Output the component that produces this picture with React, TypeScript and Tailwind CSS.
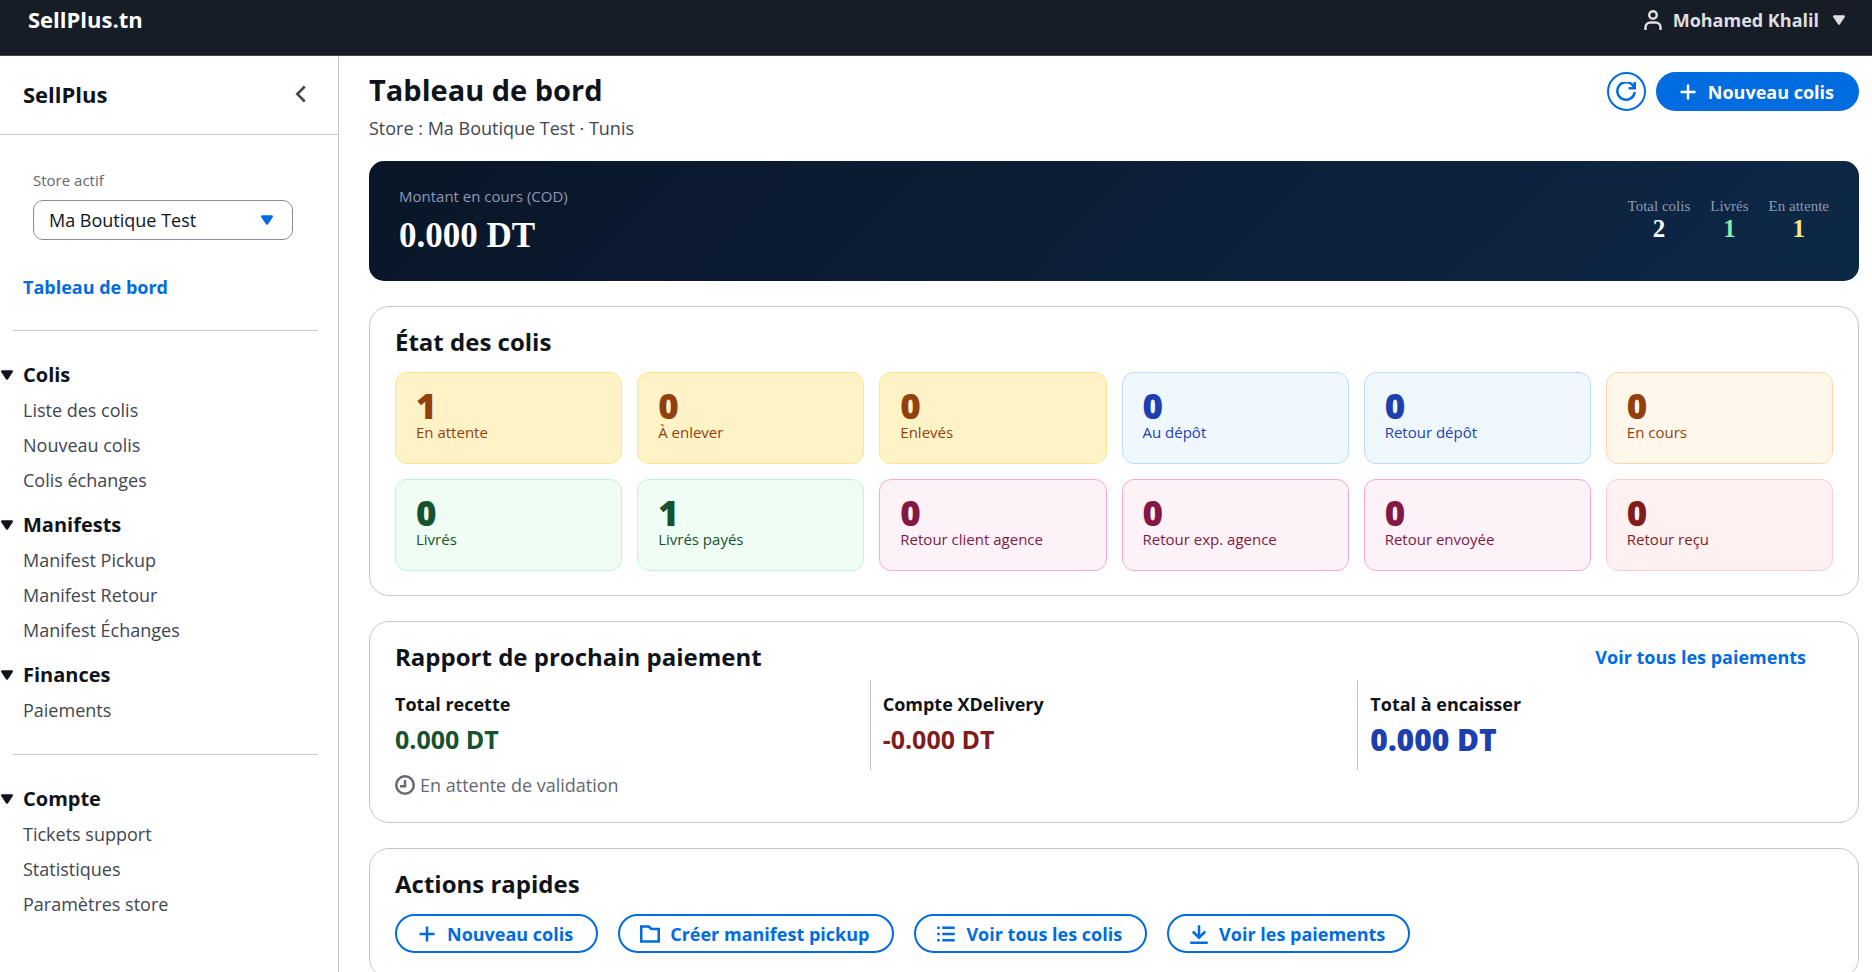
import type { ReactNode } from "react";
import clsx from "clsx";

const iconPaths = {
  user: "M2 16v-2a4 4 0 0 1 4-4h4a4 4 0 0 1 4 4v2M11 4a3 3 0 1 1-6 0 3 3 0 0 1 6 0z",
  refresh: "M10 5h5V0M15 8a7 7 0 1 1-.7-4",
  plus: "M8 2v12M14 8H2",
  left: "m11 2-6 6 6 6",
  folder: "M15 14H1V2h6l2 2h6z",
  list: "M5 3h10M5 8h10M5 13h10M1 3h2M1 8h2M1 13h2",
  download: "M1 15h14M8 1v10M3 6l5 5 5-5",
  clock: "M15 8A7 7 0 1 1 1 8a7 7 0 0 1 14 0zM8 4v5H4",
};

type IconName = keyof typeof iconPaths;

const Icon = ({ name, className }: { name: IconName; className?: string }) => (
  <svg viewBox="0 0 16 16" className={clsx("h-5 w-5 shrink-0", className)} fill="none" stroke="currentColor" strokeWidth="2" aria-hidden="true">
    <path d={iconPaths[name]} />
  </svg>
);

const Caret = ({ className }: { className?: string }) => (
  <svg viewBox="3 4 10 8" className={clsx("h-2.5 w-3 shrink-0", className)} fill="currentColor" stroke="currentColor" strokeWidth="2" strokeLinejoin="round" aria-hidden="true">
    <path d="M4 5h8l-4 6z" />
  </svg>
);

const mainSections = [
  { title: "Colis", links: ["Liste des colis", "Nouveau colis", "Colis échanges"] },
  { title: "Manifests", links: ["Manifest Pickup", "Manifest Retour", "Manifest Échanges"] },
  { title: "Finances", links: ["Paiements"] },
];

const accountSections = [
  { title: "Compte", links: ["Tickets support", "Statistiques", "Paramètres store"] },
];

const tones = {
  amber: "bg-[#fef3c7] border-[#fde68a] text-[#92400e]",
  blue: "bg-[#eff7ff] border-[#bfdbfe] text-[#1e40af]",
  orange: "bg-[#fff7ec] border-[#fed7aa] text-[#92400e]",
  green: "bg-[#f0fdf4] border-[#bbf7d0] text-[#14532d]",
  pink: "bg-[#fdf2f8] border-[#f9a8d4] text-[#831843]",
  red: "bg-[#fff1f2] border-[#fecdd3] text-[#7f1d1d]",
};

const statuses: { label: string; value: number; tone: keyof typeof tones }[] = [
  { label: "En attente", value: 1, tone: "amber" },
  { label: "À enlever", value: 0, tone: "amber" },
  { label: "Enlevés", value: 0, tone: "amber" },
  { label: "Au dépôt", value: 0, tone: "blue" },
  { label: "Retour dépôt", value: 0, tone: "blue" },
  { label: "En cours", value: 0, tone: "orange" },
  { label: "Livrés", value: 0, tone: "green" },
  { label: "Livrés payés", value: 1, tone: "green" },
  { label: "Retour client agence", value: 0, tone: "pink" },
  { label: "Retour exp. agence", value: 0, tone: "pink" },
  { label: "Retour envoyée", value: 0, tone: "pink" },
  { label: "Retour reçu", value: 0, tone: "red" },
];

const summary = [
  { label: "Total colis", value: 2, color: "text-white" },
  { label: "Livrés", value: 1, color: "text-[#86efac]" },
  { label: "En attente", value: 1, color: "text-[#fde68a]" },
];

const amounts = [
  { label: "Total recette", value: "0.000 DT", style: "text-[25px] leading-8 font-bold text-[#14532d]" },
  { label: "Compte XDelivery", value: "-0.000 DT", style: "text-[25px] leading-8 font-bold text-[#7f1d1d]" },
  { label: "Total à encaisser", value: "0.000 DT", style: "text-[30px] leading-[34px] font-extrabold text-[#1e40af]" },
];

const actions: { label: string; icon: IconName }[] = [
  { label: "Nouveau colis", icon: "plus" },
  { label: "Créer manifest pickup", icon: "folder" },
  { label: "Voir tous les colis", icon: "list" },
  { label: "Voir les paiements", icon: "download" },
];

const NavSections = ({ sections }: { sections: typeof mainSections }) => (
  <div className="flex flex-col gap-2.5">
    {sections.map((section) => (
      <div key={section.title}>
        <button type="button" aria-expanded="true" className="flex h-[35px] items-center gap-2.5 pl-px text-xl font-bold text-[#0f141a]">
          <Caret />
          {section.title}
        </button>
        <ul>
          {section.links.map((link) => (
            <li key={link} className="flex h-[35px] items-center pl-[23px]">
              <a href="#" className="text-[#424650]">{link}</a>
            </li>
          ))}
        </ul>
      </div>
    ))}
  </div>
);

const Sidebar = () => (
  <aside className="w-[339px] shrink-0 border-r border-[#c6c6cd]">
    <div className="flex h-[79px] items-center justify-between border-b border-[#c6c6cd] pr-[27px] pb-0.5 pl-[23px]">
      <h2 className="text-[22px] font-bold">SellPlus</h2>
      <button type="button" aria-label="Fermer le menu" className="text-[#424650]">
        <Icon name="left" />
      </button>
    </div>
    <div className="pt-[35px] pr-[45px] pl-[33px]">
      <label htmlFor="store" className="block text-[15px] leading-5 text-[#656871]">Store actif</label>
      <div className="relative mt-2.5">
        <select id="store" className="h-10 w-full appearance-none rounded-[10px] border border-[#8c8c94] bg-white px-[15px] text-[#0f141a]">
          <option>Ma Boutique Test</option>
        </select>
        <Caret className="pointer-events-none absolute top-[15px] right-5 text-[#006ce0]" />
      </div>
    </div>
    <nav>
      <a href="#" className="mt-[35px] block pl-[23px] font-bold leading-6 text-[#006ce0]">Tableau de bord</a>
      <hr className="mt-[31px] mr-5 mb-[26px] ml-[13px] border-[#c6c6cd]" />
      <NavSections sections={mainSections} />
      <hr className="mt-[27px] mr-5 mb-[26px] ml-[13px] border-[#c6c6cd]" />
      <NavSections sections={accountSections} />
    </nav>
  </aside>
);

const Card = ({ title, action, children }: { title: string; action?: ReactNode; children: ReactNode }) => (
  <section className="mt-[25px] rounded-[20px] border border-[#c6c6cd] px-[25px] pt-5 pb-6">
    <div className="flex h-[30px] items-center justify-between">
      <h2 className="text-2xl font-bold">{title}</h2>
      {action}
    </div>
    {children}
  </section>
);

const App = () => (
  <div className="flex h-screen flex-col overflow-hidden bg-white font-['Open_Sans',sans-serif] text-lg text-[#0f141a]">
    <header className="flex h-14 shrink-0 items-start justify-between border-b border-[#424650] bg-[#161d26] pt-1 pr-[27px] pl-7">
      <a href="#" className="text-[22px] font-bold leading-[30px] text-white">SellPlus.tn</a>
      <button type="button" className="flex h-8 items-center gap-2.5 font-bold text-[#dedee3]">
        <Icon name="user" />
        <span>Mohamed Khalil</span>
        <Caret className="ml-1" />
      </button>
    </header>

    <div className="flex min-h-0 flex-1">
      <Sidebar />
      <main className="min-w-0 flex-1 overflow-y-auto pt-4 pr-[13px] pb-6 pl-[30px] [scrollbar-width:none]">
        <div className="flex items-start justify-between">
          <h1 className="text-[29px] font-bold leading-9">Tableau de bord</h1>
          <div className="flex gap-2.5">
            <button type="button" aria-label="Actualiser" className="flex h-[39px] w-[39px] items-center justify-center rounded-full border-2 border-[#006ce0] text-[#006ce0]">
              <Icon name="refresh" />
            </button>
            <button type="button" className="flex h-[39px] items-center gap-2.5 rounded-full border-2 border-[#006ce0] bg-[#006ce0] pr-[23px] pl-5 font-bold text-white">
              <Icon name="plus" />
              Nouveau colis
            </button>
          </div>
        </div>
        <p className="mt-[5px] leading-6 text-[#424650]">Store : Ma Boutique Test · Tunis</p>

        <section className="mt-[21px] flex items-center justify-between rounded-[15px] bg-linear-135 from-[#0a1628] to-[#0d2847] px-[30px] py-[25px]">
          <div>
            <p className="text-[15px] leading-5 text-[#8d99b5]">Montant en cours (COD)</p>
            <p className="mt-2.5 font-['Liberation_Serif',serif] text-[35px] font-bold leading-10 text-white">0.000 DT</p>
          </div>
          <dl className="flex gap-5 pb-0.5 text-center font-['Liberation_Serif',serif]">
            {summary.map((item) => (
              <div key={item.label}>
                <dt className="text-[15px] leading-[18px] text-[#8d99b5]">{item.label}</dt>
                <dd className={clsx("text-[25px] font-bold leading-7", item.color)}>{item.value}</dd>
              </div>
            ))}
          </dl>
        </section>

        <Card title="État des colis">
          <div className="mt-[15px] grid grid-cols-6 gap-[15px]">
            {statuses.map((status) => (
              <div key={status.label} className={clsx("rounded-xl border px-5 pt-4 pb-[21px]", tones[status.tone])}>
                <p className="text-[35px] font-extrabold leading-[33px]">{status.value}</p>
                <p className="text-[15px] leading-5">{status.label}</p>
              </div>
            ))}
          </div>
        </Card>

        <Card
          title="Rapport de prochain paiement"
          action={<a href="#" className="pr-[27px] font-bold text-[#006ce0]">Voir tous les paiements</a>}
        >
          <div className="mt-2 grid grid-cols-3 gap-[25px]">
            {amounts.map((amount, i) => (
              <div key={amount.label} className={clsx("h-[90px] pt-3", i > 0 && "-ml-[13px] border-l border-[#c6c6cd] pl-3")}>
                <p className="font-bold leading-6">{amount.label}</p>
                <p className={clsx("mt-[7px]", amount.style)}>{amount.value}</p>
              </div>
            ))}
          </div>
          <p className="mt-[3px] mb-px flex items-center gap-[5px] leading-6 text-[#656871]">
            <Icon name="clock" />
            En attente de validation
          </p>
        </Card>

        <Card title="Actions rapides">
          <div className="mt-[15px] flex flex-wrap gap-5">
            {actions.map((action) => (
              <button key={action.label} type="button" className="flex h-[39px] items-center gap-2.5 rounded-full border-2 border-[#006ce0] pr-[23px] pl-5 font-bold text-[#006ce0]">
                <Icon name={action.icon} />
                {action.label}
              </button>
            ))}
          </div>
        </Card>
      </main>
    </div>
  </div>
);

export default App;
